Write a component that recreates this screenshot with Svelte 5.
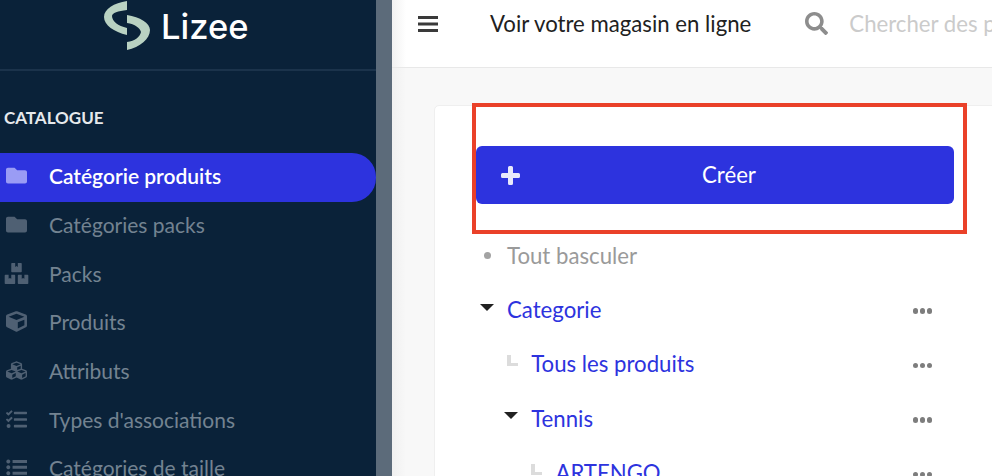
<script lang="ts">
	const folder = 'M464 128H272l-64-64H48C21.49 64 0 85.49 0 112v288c0 26.51 21.49 48 48 48h416c26.51 0 48-21.49 48-48V176c0-26.51-21.49-48-48-48z';
	const cube = 'M239.100 6.300l-208 78c-18.700 7-31.100 25-31.100 45v225.100c0 18.200 10.300 34.800 26.500 42.900l208 104c13.500 6.800 29.400 6.800 42.900 0l208-104c16.300-8.100 26.500-24.800 26.500-42.900V129.300c0-20-12.400-37.900-31.100-44.900l-208-78C262 2.200 250 2.200 239.100 6.300zM256 68.400l192 72v1.100l-192 78-192-78v-1.100l192-72zm32 356V275.500l160-65v133.900l-160 80z';
	const boxes = 'M560 288h-80v96l-32-21.300-32 21.300v-96h-80c-8.800 0-16 7.200-16 16v192c0 8.800 7.200 16 16 16h224c8.800 0 16-7.200 16-16V304c0-8.800-7.200-16-16-16zm-384-64h224c8.800 0 16-7.200 16-16V16c0-8.800-7.200-16-16-16h-80v96l-32-21.300L256 96V0h-80c-8.800 0-16 7.200-16 16v192c0 8.800 7.200 16 16 16zm64 64h-80v96l-32-21.300L96 384v-96H16c-8.800 0-16 7.200-16 16v192c0 8.800 7.200 16 16 16h224c8.800 0 16-7.200 16-16V304c0-8.800-7.200-16-16-16z';
	const cubes = 'M488.600 250.200L392 214V105.500c0-15-9.300-28.400-23.400-33.700l-100-37.500c-8.100-3.100-17.100-3.100-25.300 0l-100 37.500c-14.100 5.300-23.400 18.700-23.400 33.700V214l-96.600 36.200C9.300 255.500 0 268.900 0 283.900V394c0 13.600 7.700 26.100 19.900 32.200l100 50c10.100 5.100 22.100 5.100 32.200 0l103.900-52 103.900 52c10.100 5.100 22.100 5.100 32.200 0l100-50c12.200-6.100 19.900-18.600 19.900-32.200V283.900c0-15-9.300-28.400-23.400-33.700zM358 214.800l-85 31.900v-68.200l85-37v73.300zM154 104.100l102-38.200 102 38.200v.6l-102 41.400-102-41.400v-.6zm84 291.100l-85 42.500v-79.100l85-38.800v75.400zm0-112l-102 41.400-102-41.400v-.6l102-38.200 102 38.200v.6zm240 112l-85 42.500v-79.100l85-38.800v75.400zm0-112l-102 41.400-102-41.400v-.6l102-38.200 102 38.200v.6z';
	const tasks = 'M139.610 35.500a12 12 0 0 0-17 0L58.930 98.810l-22.700-22.120a12 12 0 0 0-17 0L3.530 92.410a12 12 0 0 0 0 17l47.590 47.400a12.780 12.780 0 0 0 17.610 0l15.590-15.620L156.520 69a12.090 12.090 0 0 0 .09-17zm0 159.190a12 12 0 0 0-17 0l-63.680 63.720-22.700-22.100a12 12 0 0 0-17 0L3.530 252a12 12 0 0 0 0 17L51 316.500a12.770 12.770 0 0 0 17.600 0l15.700-15.690 72.200-72.220a12 12 0 0 0 .09-16.900zM64 368c-26.490 0-48.590 21.500-48.590 48S37.530 464 64 464a48 48 0 0 0 0-96zm432 16H208a16 16 0 0 0-16 16v32a16 16 0 0 0 16 16h288a16 16 0 0 0 16-16v-32a16 16 0 0 0-16-16zm0-320H208a16 16 0 0 0-16 16v32a16 16 0 0 0 16 16h288a16 16 0 0 0 16-16V80a16 16 0 0 0-16-16zm0 160H208a16 16 0 0 0-16 16v32a16 16 0 0 0 16 16h288a16 16 0 0 0 16-16v-32a16 16 0 0 0-16-16z';
	const list = 'M160 72h352v72H160zM160 216h352v72H160zM160 360h352v72H160zM56 60a48 48 0 1 1-.1 0zM56 204a48 48 0 1 1-.1 0zM56 348a48 48 0 1 1-.1 0z';
	const search = 'M505 442.700L405.300 343c-4.500-4.500-10.600-7-17-7H372c27.600-35.300 44-79.700 44-128C416 93.100 322.900 0 208 0S0 93.100 0 208s93.100 208 208 208c48.300 0 92.700-16.400 128-44v16.300c0 6.400 2.500 12.500 7 17l99.700 99.700c9.400 9.400 24.600 9.400 33.900 0l28.300-28.300c9.400-9.400 9.400-24.600.1-34zM208 336c-70.700 0-128-57.200-128-128 0-70.700 57.200-128 128-128 70.700 0 128 57.200 128 128 0 70.700-57.200 128-128 128z';

	const nav = [
		{ label: 'Catégorie produits', icon: folder, box: '0 0 512 512', active: true },
		{ label: 'Catégories packs', icon: folder, box: '0 0 512 512' },
		{ label: 'Packs', icon: boxes, box: '0 0 576 512' },
		{ label: 'Produits', icon: cube, box: '0 0 512 512' },
		{ label: 'Attributs', icon: cubes, box: '0 0 512 512' },
		{ label: "Types d'associations", icon: tasks, box: '0 0 512 512' },
		{ label: 'Catégories de taille', icon: list, box: '0 0 512 512' }
	];

	const tree = [
		{ label: 'Categorie', depth: 0, kind: 'caret' },
		{ label: 'Tous les produits', depth: 1, kind: 'leaf' },
		{ label: 'Tennis', depth: 1, kind: 'caret' },
		{ label: 'ARTENGO', depth: 2, kind: 'leaf' }
	];
</script>

<div class="page">
	<aside class="sidebar">
		<div class="brand">
			<svg class="logo" viewBox="0 0 48 50" width="48" height="50">
				<path fill="#b9d2c2" d="M24 1C11 3 1 9 1 17c0 8 10 15 23 18v-7C15 26 9 21 9 16c0-3 6-5 15-6zM24 15c13 2 23 8 23 15 0 9-10 17-23 20v-8c8-1 13-5 14-10-1-4-6-8-14-9z" />
			</svg>
			<span class="brand-name">Lizee</span>
		</div>
		<h2 class="section">CATALOGUE</h2>
		<nav class="nav">
			{#each nav as item}
				<div class="nav-item" class:active={item.active}>
					<span class="nav-icon"><svg viewBox={item.box}><path d={item.icon} /></svg></span>
					<span>{item.label}</span>
				</div>
			{/each}
		</nav>
	</aside>
	<div class="strip"></div>
	<main class="main">
		<header class="topbar">
			<svg class="burger" viewBox="0 0 20 18" width="20" height="18">
				<path d="M0 1h20v3H0zM0 7.500h20v3H0zM0 14h20v3H0z" />
			</svg>
			<span class="store-link">Voir votre magasin en ligne</span>
			<svg class="search" viewBox="0 0 512 512" width="23" height="23"><path d={search} /></svg>
			<span class="placeholder">Chercher des produits</span>
		</header>
		<section class="content">
			<div class="card">
				<div class="callout"></div>
				<button class="create">
					<svg class="plus" viewBox="0 0 21 21" width="21" height="21">
						<path d="M8 2.500a1.500 1.500 0 0 1 1.500-1.500h2A1.500 1.500 0 0 1 13 2.500V8h5.500A1.500 1.500 0 0 1 20 9.500v2a1.500 1.500 0 0 1-1.500 1.500H13v5.500a1.500 1.500 0 0 1-1.500 1.500h-2A1.500 1.500 0 0 1 8 18.500V13H2.500A1.500 1.500 0 0 1 1 11.500v-2A1.500 1.500 0 0 1 2.500 8H8z" />
					</svg>
					Créer
				</button>
				<div class="tree">
					<div class="row toggle-all">
						<span class="marker"><i class="dot"></i></span>
						<span>Tout basculer</span>
					</div>
					{#each tree as node}
						<div class="row" style="padding-left: {node.depth * 24.2}px">
							<span class="marker">
								{#if node.kind === 'caret'}
									<i class="caret"></i>
								{:else}
									<i class="leaf"></i>
								{/if}
							</span>
							<span class="link">{node.label}</span>
							<span class="more"><i></i><i></i><i></i></span>
						</div>
					{/each}
				</div>
			</div>
		</section>
	</main>
</div>

<style>
	:global(body) {
		margin: 0;
		background: #f8f8f8;
		overflow: hidden;
	}

	.page {
		display: flex;
		width: 992px;
		height: 476px;
		overflow: hidden;
		font-family: Lato, 'Liberation Sans', sans-serif;
		font-size: 22.2px;
	}

	.sidebar {
		flex: 0 0 376px;
		background: #0a2239;
		color: #738391;
		font-size: 21px;
	}

	.brand {
		display: flex;
		align-items: center;
		gap: 10px;
		height: 71px;
		padding: 0 0 19px 103px;
		box-sizing: border-box;
		border-bottom: 2px solid #1b334b;
	}

	.logo {
		flex: none;
	}

	.brand-name {
		margin-top: 2px;
		font-family: Inter, sans-serif;
		font-size: 34.5px;
		font-weight: 500;
		color: #fff;
	}

	.section {
		margin: 36px 0 25px 4px;
		font-size: 17px;
		line-height: 21px;
		font-weight: 700;
		color: #e6e9ec;
	}

	.nav-item {
		display: flex;
		align-items: center;
		height: 48.7px;
		padding: 0 0 3px 4px;
		gap: 20px;
		box-sizing: border-box;
	}

	.nav-item.active {
		color: #fff;
		font-weight: 600;
		background: #2d33de;
		border-radius: 0 24px 24px 0;
	}

	.nav-icon {
		flex: none;
		display: flex;
		justify-content: center;
		width: 25px;
	}

	.nav-icon svg {
		width: 100%;
		height: 21px;
		fill: #4f6073;
	}

	.nav-item:not(:nth-child(3)) .nav-icon svg {
		width: 21px;
	}

	.active .nav-icon svg {
		fill: #9a9cf5;
	}

	.strip {
		flex: 0 0 16px;
		background: #5c6b7a;
	}

	.main {
		flex: 1;
		min-width: 0;
		display: flex;
		flex-direction: column;
		background: linear-gradient(90deg, #f0f0f0, #f8f8f8 14px);
	}

	.topbar {
		flex: 0 0 68px;
		display: flex;
		align-items: center;
		box-sizing: border-box;
		padding: 0 0 20px 26px;
		background: linear-gradient(90deg, #f1f1f1, #fff 14px);
		border-bottom: 1px solid #e8e8e8;
		overflow: hidden;
		white-space: nowrap;
	}

	.burger {
		flex: none;
		fill: #3a3a3a;
	}

	.store-link {
		margin-left: 52px;
		color: #212121;
	}

	.search {
		flex: none;
		margin-left: 54px;
		fill: #8d8d8d;
	}

	.placeholder {
		margin-left: 21px;
		color: #cbcbcb;
	}

	.content {
		flex: 1;
		padding: 37px 0 0 42px;
		min-height: 0;
	}

	.card {
		position: relative;
		width: 580px;
		box-sizing: border-box;
		padding: 40px 60px 0 41px;
		background: #fff;
		border: 1px solid #efefef;
		border-radius: 5px;
	}

	.callout {
		position: absolute;
		left: 37px;
		top: -3px;
		width: 495px;
		height: 131px;
		box-sizing: border-box;
		border: 4px solid #ea4129;
		pointer-events: none;
	}

	.create {
		position: relative;
		display: flex;
		align-items: center;
		justify-content: center;
		width: 478px;
		height: 58px;
		padding: 0 0 2px 28px;
		border: 0;
		border-radius: 6px;
		background: #2d33de;
		color: #fff;
		font: inherit;
	}

	.plus {
		position: absolute;
		left: 24px;
		top: 19px;
		fill: #e8e9fb;
	}

	.tree {
		margin-top: 24px;
	}

	.row {
		display: flex;
		align-items: center;
		height: 54.4px;
		padding-right: 21px;
		box-sizing: border-box;
	}

	.toggle-all {
		color: #9a9a9a;
	}

	.marker {
		flex: none;
		display: flex;
		align-items: center;
		justify-content: center;
		width: 31px;
		height: 20px;
		padding-right: 9px;
		box-sizing: border-box;
	}

	.dot {
		width: 7px;
		height: 7px;
		border-radius: 50%;
		background: #a3a3a3;
	}

	.caret {
		width: 0;
		height: 0;
		margin-top: -5px;
		border-left: 7px solid transparent;
		border-right: 7px solid transparent;
		border-top: 7px solid #212121;
	}

	.leaf {
		width: 7px;
		height: 8px;
		margin: -7px 0 0 3px;
		border-left: 4px solid #dcdcdc;
		border-bottom: 3px solid #dcdcdc;
	}

	.link {
		color: #2d33de;
	}

	.more {
		display: flex;
		gap: 1.5px;
		margin-left: auto;
		padding-top: 3px;
	}

	.more i {
		width: 5.5px;
		height: 5.5px;
		border-radius: 50%;
		background: #7d7d7d;
	}
</style>
